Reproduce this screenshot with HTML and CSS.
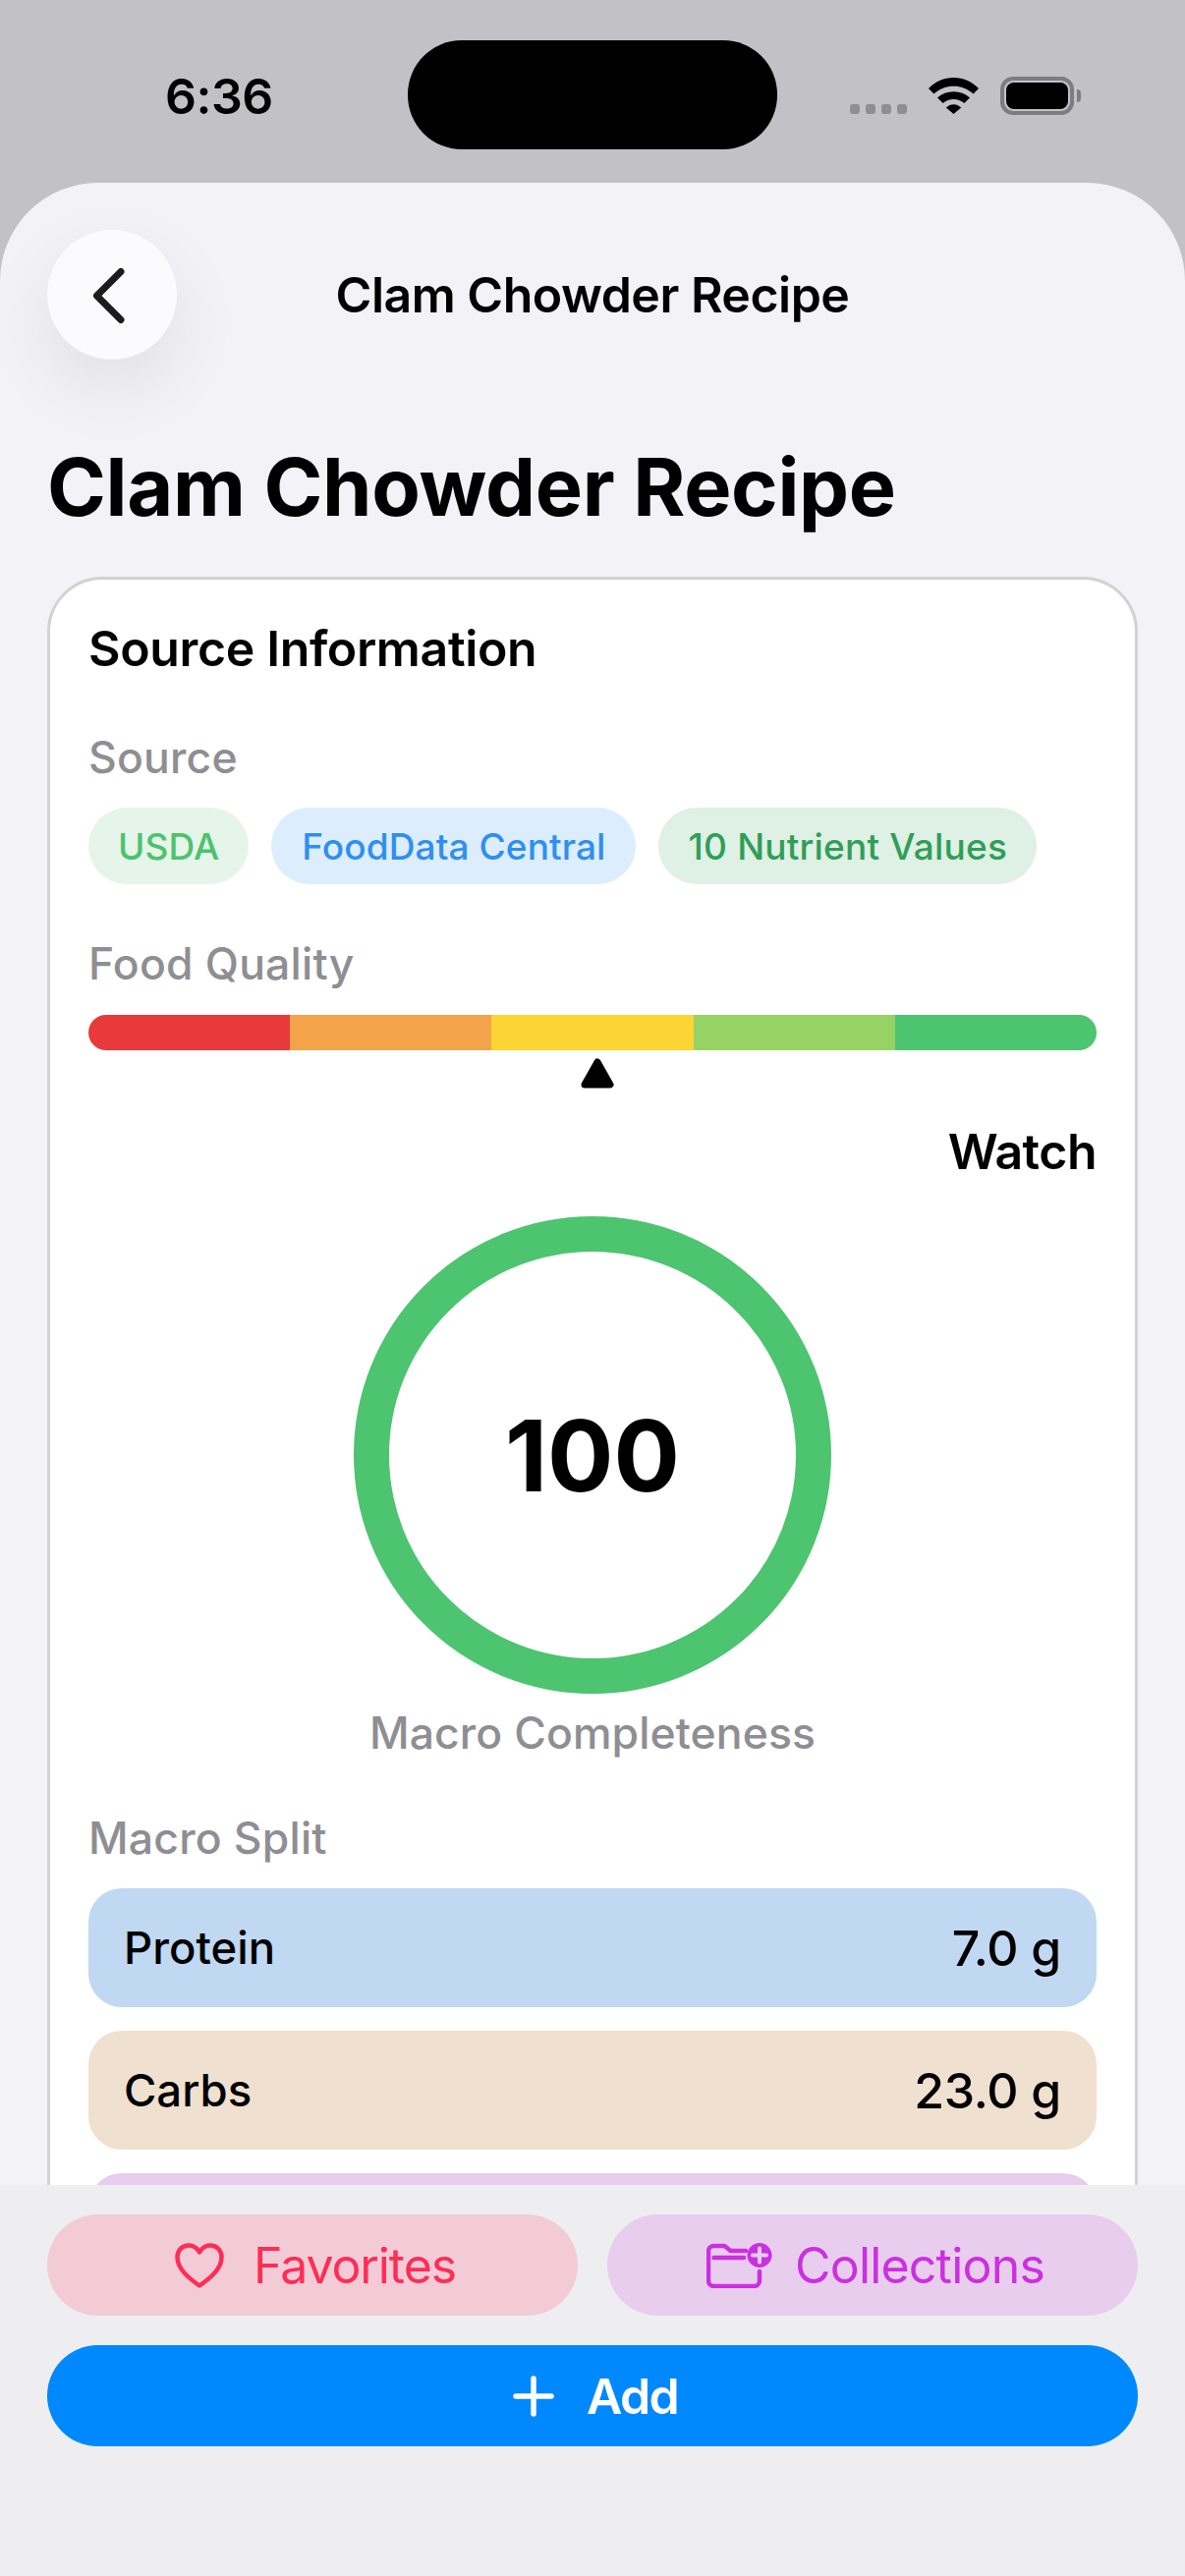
FILE: index.html
```html
<!DOCTYPE html>
<html lang="en">
<head>
<meta charset="utf-8">
<title>Clam Chowder Recipe</title>
<link rel="stylesheet" href="styles.css">
</head>
<body>
<div class="screen">
  <header class="status">
    <span class="time">6:36</span>
    <span class="island"></span>
    <span class="dots"><i></i><i></i><i></i><i></i></span>
    <svg class="wifi" width="51" height="37" viewBox="0 0 51 37"><path d="M0 11C14-3.6 37-3.6 51 11L45.6 16.6C34 6 17 6 5.400 16.600Z"/><path d="M9 20.500C18 12 33 12 42 20.500L36.300 26C30 20.700 21 20.700 14.700 26Z"/><path d="M17.800 30.600C22.300 26 28.700 26 33.200 30.600L25.500 37Z"/></svg>
    <span class="battery"><span class="battery-fill"></span></span>
    <span class="battery-tip"></span>
  </header>
  <main class="sheet">
    <nav class="nav">
      <button class="back" aria-label="Back"><svg width="40" height="60" viewBox="0 0 40 60"><path class="chevron" d="M33 6.500 8.500 31 33 55.500"/></svg></button>
      <span class="nav-title">Clam Chowder Recipe</span>
    </nav>
    <h1 class="title">Clam Chowder Recipe</h1>
    <section class="card">
      <h2 class="card-title">Source Information</h2>
      <div class="label label-source">Source</div>
      <div class="pills">
        <span class="pill pill-usda">USDA</span>
        <span class="pill pill-fdc">FoodData Central</span>
        <span class="pill pill-values">10 Nutrient Values</span>
      </div>
      <div class="label label-quality">Food Quality</div>
      <div class="bar"><i class="s1"></i><i class="s2"></i><i class="s3"></i><i class="s4"></i><i class="s5"></i></div>
      <div class="marker-row"><svg width="34" height="31" viewBox="0 0 34 31"><path class="marker" d="M17 4 30 27H4Z"/></svg></div>
      <div class="rating">Watch</div>
      <div class="ring-wrap"><div class="ring">100</div></div>
      <div class="ring-label">Macro Completeness</div>
      <div class="label label-split">Macro Split</div>
      <div class="macro macro-protein"><span>Protein</span><span class="amount">7.0 g</span></div>
      <div class="macro macro-carbs"><span>Carbs</span><span class="amount">23.0 g</span></div>
      <div class="macro macro-fat"></div>
    </section>
    <footer class="actions">
      <div class="action-row">
        <button class="btn btn-fav">
          <svg class="icon-heart" width="50" height="46" viewBox="0 0 50 46"><path d="M25 43.500C13 35 2.500 26 2.500 14.500 2.500 7.500 7.500 2.500 14 2.500 18.500 2.500 22.500 5 25 9.500 27.500 5 31.500 2.500 36 2.500 42.500 2.500 47.500 7.500 47.500 14.500 47.500 26 37 35 25 43.500Z"/></svg>
          <span>Favorites</span>
        </button>
        <button class="btn btn-col">
          <svg class="icon-folder" width="67" height="46" viewBox="0 0 67 46"><path d="M40 8H24.500L19 3.500 18 3H7.500A5.500 5.500 0 0 0 2 8.500V38.500A5.500 5.500 0 0 0 7.500 44H48.500A5.500 5.500 0 0 0 54 38.500V29"/><path d="M7.500 15H38"/><circle class="folder-badge" cx="54" cy="12.500" r="12.500"/><path class="folder-plus" d="M54 5.500V19.500M47 12.500H61"/></svg>
          <span>Collections</span>
        </button>
      </div>
      <button class="btn btn-add">
        <svg class="icon-plus" width="42" height="42" viewBox="0 0 42 42"><path d="M21 3V39M3 21H39"/></svg>
        <span>Add</span>
      </button>
    </footer>
  </main>
</div>
</body>
</html>
```

FILE: styles.css
```css
* { box-sizing: border-box; }
html, body { margin: 0; padding: 0; }
body { width: 1206px; height: 2622px; overflow: hidden; font-family: Inter, "Noto Sans", sans-serif; color: #000; }

.screen { width: 1206px; height: 2622px; background: #c2c1c6; display: flex; flex-direction: column; }

.status { height: 186px; flex: none; display: flex; align-items: flex-start; }
.time { margin: 68px 0 0 168px; width: 247px; font-size: 50px; line-height: 60px; font-weight: 600; letter-spacing: -0.5px; }
.island { margin-top: 41px; width: 376px; height: 111px; border-radius: 55px; background: #000; }
.dots { margin: 66px 0 0 74px; padding-top: 40px; display: flex; gap: 6px; }
.dots i { width: 10px; height: 10px; border-radius: 3px; background: #8f8f93; }
.wifi { margin: 79px 0 0 22px; fill: #000; }
.battery { margin: 78px 0 0 22px; width: 75px; height: 39px; border: 4px solid #7d7d80; border-radius: 13px; padding: 2px; display: flex; }
.battery-fill { flex: 1; background: #000; border-radius: 8px; }
.battery-tip { margin: 91px 0 0 3px; width: 4px; height: 13px; background: #7d7d80; border-radius: 0 4px 4px 0; }

.sheet { position: relative; flex: 1; overflow: hidden; background: #f2f2f7; border-radius: 100px 100px 0 0; padding: 48px 48px 0; }

.nav { display: grid; grid-template-columns: 132px 1fr 132px; align-items: center; height: 132px; }
.back { width: 132px; height: 132px; padding: 0; border: 0; border-radius: 50%; background: #fbfbfe; box-shadow: 0 28px 72px rgba(0,0,0,.08); display: flex; align-items: center; justify-content: center; }
.back svg { margin-left: -8px; }
.chevron { fill: none; stroke: #1c1c1e; stroke-width: 7; stroke-linecap: round; stroke-linejoin: round; }
.nav-title { text-align: center; font-size: 50px; line-height: 60px; font-weight: 600; letter-spacing: -0.5px; }

.title { margin: 80px 0 0; font-size: 81px; line-height: 100px; font-weight: 700; letter-spacing: -0.3px; }

.card { margin-top: 41px; background: #fff; border: 3px solid #d1d1d6; border-radius: 56px; padding: 40px 39px 0; height: 1800px; }
.card-title { margin: 0; font-size: 50px; line-height: 60px; font-weight: 600; letter-spacing: -0.35px; }
.label { font-size: 44.5px; line-height: 54px; font-weight: 500; color: #8e8e93; letter-spacing: 0.2px; }
.label-source { margin-top: 54px; }
.pills { display: flex; gap: 23px; margin-top: 24px; }
.pill { height: 78px; padding: 0 30px; border-radius: 39px; display: flex; align-items: center; font-size: 37px; font-weight: 500; letter-spacing: 0.1px; }
.pill-usda { background: #e6f5ea; color: #4cc36c; }
.pill-fdc { background: #dcedfd; color: #2f8ff0; padding: 0 31px; }
.pill-values { background: #dff0e4; color: #2f9e58; letter-spacing: 0.2px; }
.label-quality { margin-top: 54px; }

.bar { margin-top: 25px; height: 36px; border-radius: 18px; overflow: hidden; display: flex; }
.bar i { flex: 1; }
.s1 { background: #e83a3a; }
.s2 { background: #f3a44b; }
.s3 { background: #fcd535; }
.s4 { background: #96d264; }
.s5 { background: #4dc46f; }
.marker-row { margin-top: 8px; height: 31px; padding-left: 501px; display: flex; }
.marker { fill: #000; stroke: #000; stroke-width: 7; stroke-linejoin: round; }

.rating { margin-top: 34px; text-align: right; font-size: 50px; line-height: 60px; font-weight: 600; letter-spacing: -0.5px; }
.ring-wrap { margin-top: 36px; display: flex; justify-content: center; }
.ring { width: 486px; height: 486px; border: 36px solid #4dc46f; border-radius: 50%; display: flex; align-items: center; justify-content: center; font-size: 100px; font-weight: 700; }
.ring-label { margin-top: 13px; text-align: center; font-size: 44.5px; line-height: 54px; font-weight: 500; color: #8e8e93; letter-spacing: 0.1px; }
.label-split { margin-top: 53px; }

.macro { height: 121px; margin-bottom: 24px; border-radius: 34px; padding: 0 36px; display: flex; align-items: center; justify-content: space-between; font-size: 45.500px; font-weight: 500; }
.label-split + .macro { margin-top: 24px; }
.amount { font-size: 50px; font-weight: 500; letter-spacing: -0.3px; }
.macro-protein { background: #c0d8f1; }
.macro-carbs { background: #f0e0d0; }
.macro-fat { background: #e6cdec; }

.actions { position: absolute; left: 0; right: 0; bottom: 0; height: 398px; background: #eeeef1; padding: 30px 48px 0; display: flex; flex-direction: column; gap: 30px; }
.action-row { display: grid; grid-template-columns: 1fr 1fr; gap: 30px; }
.btn { height: 103px; border: 0; border-radius: 52px; display: flex; align-items: center; justify-content: center; font-family: inherit; font-size: 50px; font-weight: 400; padding: 0 0 0 6px; }
.btn-fav { background: #f2cbd6; color: #ff2d55; gap: 30px; letter-spacing: -1.1px; }
.btn-col { background: #e8cdee; color: #cb30e0; gap: 23px; letter-spacing: -0.8px; }
.btn-add { background: #0088ff; color: #fff; font-weight: 600; gap: 33px; letter-spacing: -1.6px; }
.icon-heart path { fill: none; stroke: #ff2d55; stroke-width: 4.500; stroke-linejoin: round; }
.icon-folder path { fill: none; stroke: #cb30e0; stroke-width: 4.500; stroke-linecap: round; stroke-linejoin: round; }
.icon-folder .folder-badge { fill: #cb30e0; }
.icon-folder .folder-plus { stroke: #e8cdee; stroke-width: 4; }
.icon-plus path { fill: none; stroke: #fff; stroke-width: 5.500; stroke-linecap: round; }
```
